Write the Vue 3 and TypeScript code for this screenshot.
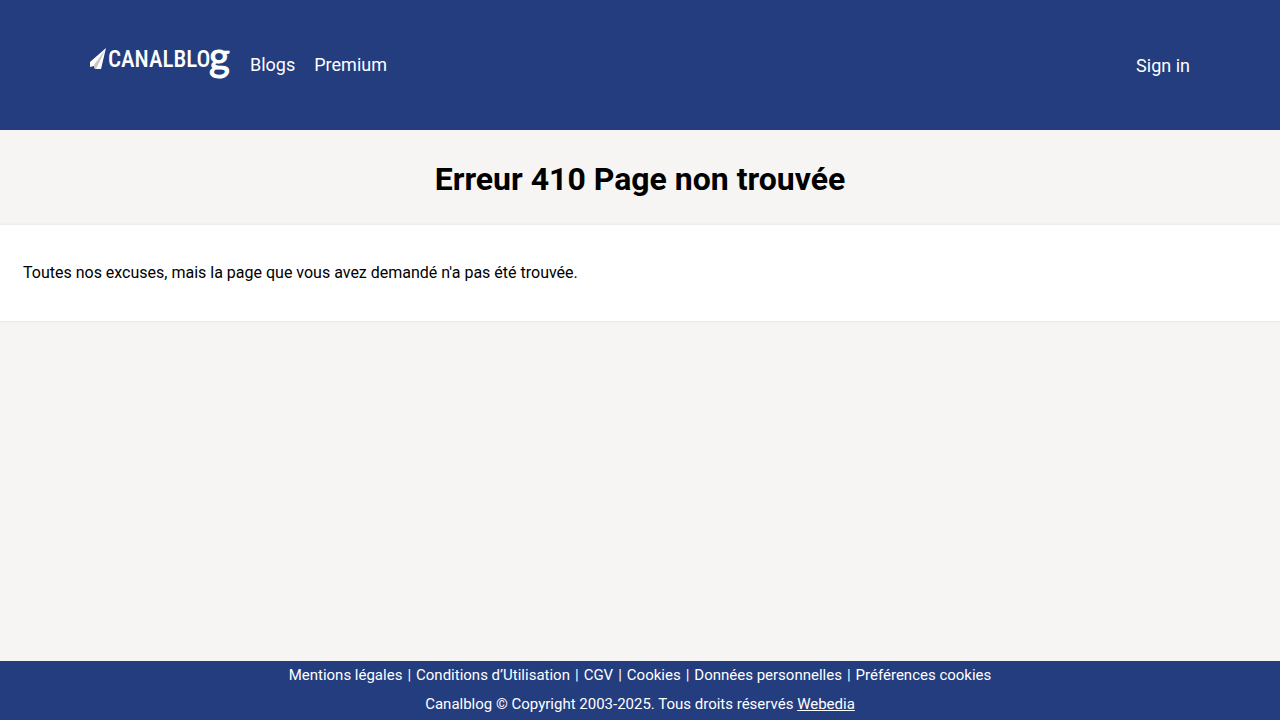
<script setup lang="ts">
interface NavLink {
  label: string
  href: string
}

const navLinks: NavLink[] = [
  { label: 'Blogs', href: '#blogs' },
  { label: 'Premium', href: '#premium' },
]

const legalLinks: NavLink[] = [
  { label: 'Mentions légales', href: '#mentions' },
  { label: 'Conditions d’Utilisation', href: '#conditions' },
  { label: 'CGV', href: '#cgv' },
  { label: 'Cookies', href: '#cookies' },
  { label: 'Données personnelles', href: '#donnees' },
  { label: 'Préférences cookies', href: '#preferences' },
]
</script>

<template>
  <div class="page">
    <header class="header">
      <div class="header-inner">
        <a class="logo" href="#accueil" aria-label="Canalblog">
          <svg width="140" height="40" viewBox="0 0 140 40">
            <path d="M16 3 0 17v5l4-1 1 3h6z" fill="#fff" />
            <path d="M15 5 4 20v3l2 1z" fill="#c4c6cb" />
            <text class="logo-word" x="18" y="22">CANALBLO</text>
            <text class="logo-tail" x="119" y="26">g</text>
          </svg>
        </a>
        <nav class="nav">
          <a v-for="link in navLinks" :key="link.label" :href="link.href">{{ link.label }}</a>
        </nav>
        <a class="sign-in" href="#connexion">Sign in</a>
      </div>
    </header>

    <main class="main">
      <h1>Erreur 410 Page non trouvée</h1>
      <section class="panel">
        <p>Toutes nos excuses, mais la page que vous avez demandé n'a pas été trouvée.</p>
      </section>
    </main>

    <footer class="footer">
      <div class="legal">
        <template v-for="(link, index) in legalLinks" :key="link.label">
          <span v-if="index > 0">|</span>
          <a :href="link.href">{{ link.label }}</a>
        </template>
      </div>
      <div>
        Canalblog © Copyright 2003-2025. Tous droits réservés
        <a class="underlined" href="#webedia">Webedia</a>
      </div>
    </footer>
  </div>
</template>

<style>
body {
  margin: 0;
  background: #f6f5f3;
}
</style>

<style scoped>
.page {
  display: flex;
  flex-direction: column;
  min-height: 100vh;
  font-family: Roboto, "Liberation Sans", sans-serif;
  font-size: 16px;
  color: #000;
  background: #f6f5f3;
}

a {
  color: inherit;
  text-decoration: none;
}

.header {
  padding: 45px 24px;
  color: #fff;
  background: #233d7f;
}

.header-inner {
  display: flex;
  align-items: center;
  max-width: 1100px;
  height: 40px;
  margin: 0 auto;
  font-size: 18px;
}

.logo {
  flex: none;
  width: 140px;
  height: 40px;
  margin-right: 20px;
}

.logo svg {
  display: block;
  overflow: visible;
}

.logo-word {
  font: 500 23px "Roboto Condensed", "Liberation Sans Narrow", Roboto, sans-serif;
  fill: #fff;
}

.logo-tail {
  font: 400 40px Lato, sans-serif;
  fill: #fff;
  stroke: #fff;
  stroke-width: 1px;
}

.nav {
  display: flex;
  gap: 19px;
  padding-bottom: 2px;
}

.sign-in {
  margin-left: auto;
}

.main {
  flex: 1;
}

h1 {
  margin: 0;
  padding: 30px 24px 27px;
  font-size: 32px;
  line-height: 38px;
  font-weight: 700;
  text-align: center;
}

.panel {
  padding: 36px 23px;
  background: #fff;
  box-shadow: 0 0 3px rgba(0, 0, 0, 0.1);
}

.panel p {
  margin: 0;
  line-height: 24px;
}

.footer {
  display: flex;
  flex-direction: column;
  font-size: 15px;
  line-height: 29px;
  padding-bottom: 1px;
  text-align: center;
  color: #fff;
  background: #233d7f;
}

.legal {
  display: flex;
  flex-wrap: wrap;
  justify-content: center;
  column-gap: 5px;
}

.underlined {
  text-decoration: underline;
}
</style>
